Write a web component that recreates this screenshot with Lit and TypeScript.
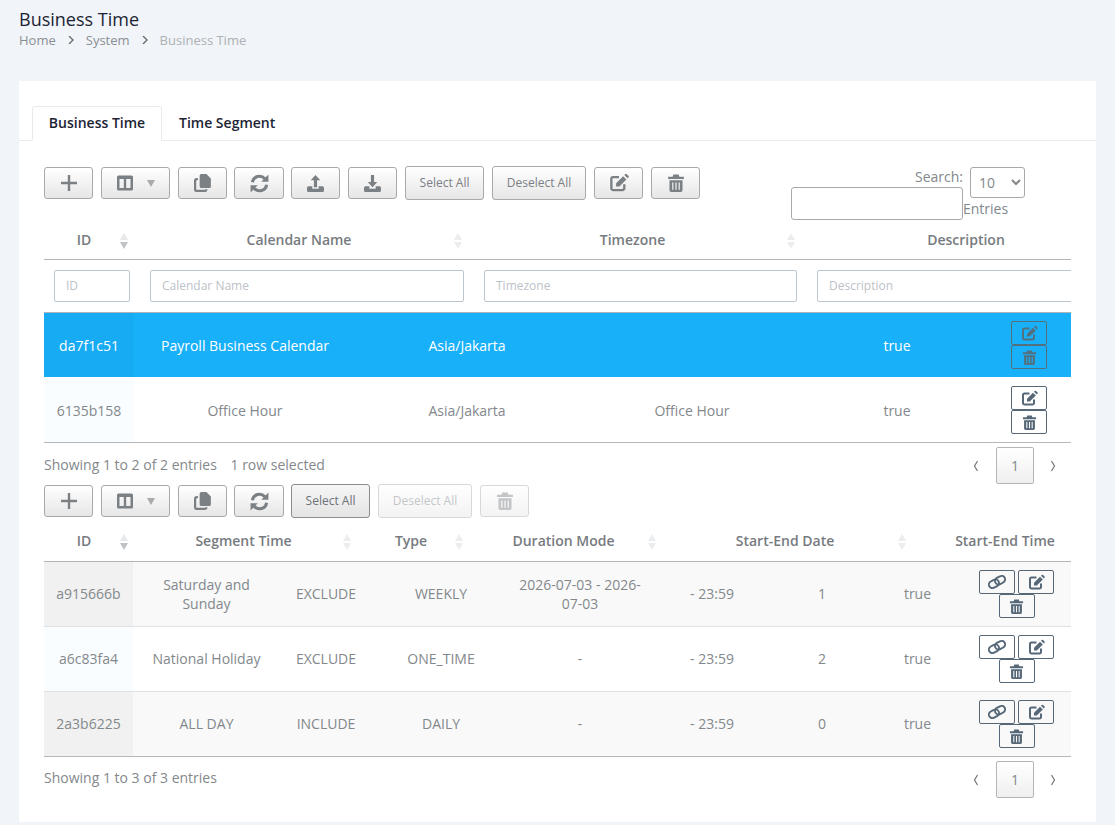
import { LitElement, html, css, svg } from 'lit';
import { customElement } from 'lit/decorators.js';

const TRAY = 'M1.5 10.5H5V13h6v-2.5h3.500a1.500 1.500 0 0 1 1.500 1.500v2.500a1.500 1.500 0 0 1-1.500 1.500h-13A1.500 1.500 0 0 1 0 14.500V12a1.500 1.500 0 0 1 1.500-1.500z';

const ICONS: Record<string, ReturnType<typeof svg>> = {
  columns: svg`<svg viewBox="0 0 16 15"><path fill-rule="evenodd" d="M1.500 0h13A1.500 1.500 0 0 1 16 1.500v12a1.500 1.500 0 0 1-1.500 1.500h-13A1.500 1.500 0 0 1 0 13.500v-12A1.500 1.500 0 0 1 1.500 0zM2.500 3.500v9h4.300v-9zM9.200 3.500v9h4.300v-9z"/></svg>`,
  copy: svg`<svg viewBox="0 0 16 16"><path d="M6.500 0H11l4 4v7a1.500 1.500 0 0 1-1.500 1.500h-7A1.500 1.500 0 0 1 5 11V1.500A1.500 1.500 0 0 1 6.500 0z"/><path d="M3.500 4.500H2.500A1.500 1.500 0 0 0 1 6v8a1 1 0 0 0 1 1h7.500a1.500 1.500 0 0 0 1.500-1.500" fill="none" stroke="currentColor" stroke-width="2"/></svg>`,
  sync: svg`<svg viewBox="0 0 16 16"><path d="M2 7a6 6 0 0 1 10.500-3M14 9a6 6 0 0 1-10.500 3" fill="none" stroke="currentColor" stroke-width="2.600"/><path d="M15.500.5V6.500H9.500zM.5 15.500V9.500H6.500z"/></svg>`,
  upload: svg`<svg viewBox="0 0 16 16"><path d="M8 0l4.500 5H9.500v6.500h-3V5H3.500z"/><path d=${TRAY}/></svg>`,
  download: svg`<svg viewBox="0 0 16 16"><path d="M6.500 0h3v6.500h3L8 11.500 3.500 6.500h3z"/><path d=${TRAY}/></svg>`,
  edit: svg`<svg viewBox="0 0 17 16"><path d="M8.500 3H3.500A1.500 1.500 0 0 0 2 4.500v8A1.500 1.500 0 0 0 3.500 14h8a1.500 1.500 0 0 0 1.500-1.500V9" fill="none" stroke="currentColor" stroke-width="2"/><path d="M6 11V8.200L12 2.200 14.800 5l-6 6z"/><path d="M13 1.200l.7-.7a1 1 0 0 1 1.400 0l1.400 1.400a1 1 0 0 1 0 1.400l-.7.7z"/></svg>`,
  trash: svg`<svg viewBox="0 0 14 16"><path d="M0 2.500h4L4.600.5h4.800l.6 2h4v2H0z"/><path fill-rule="evenodd" d="M1.200 5.500h11.600v9a1.500 1.500 0 0 1-1.500 1.500H2.700a1.500 1.500 0 0 1-1.500-1.500zM3.600 7.500V14h1.100V7.500zM6.450 7.500V14h1.100V7.500zM9.300 7.500V14h1.100V7.500z"/></svg>`,
  link: svg`<svg viewBox="0 0 18 14"><g fill="none" stroke="currentColor" stroke-width="1.900"><rect x="0.800" y="5.300" width="10.500" height="7" rx="3.500" transform="rotate(-28 6 9)"/><rect x="6.700" y="1.700" width="10.500" height="7" rx="3.500" transform="rotate(-28 12 5)"/></g></svg>`,
  plus: svg`<svg viewBox="0 0 16 16"><path d="M6.800 0h2.400v6.800H16v2.400H9.200V16H6.800V9.200H0V6.800h6.800z"/></svg>`,
};

const icon = (name: string, size = 18) =>
  html`<span class="ic" style="width:${size}px;height:${size}px">${ICONS[name]}</span>`;

type Col = { label: string; width: number };
const cal_head: Col[] = [
  { label: 'ID', width: 96 },
  { label: 'Calendar Name', width: 334 },
  { label: 'Timezone', width: 333 },
  { label: 'Description', width: 334 },
];
const seg_head: Col[] = [
  { label: 'ID', width: 96 },
  { label: 'Segment Time', width: 223 },
  { label: 'Type', width: 112 },
  { label: 'Duration Mode', width: 193 },
  { label: 'Start-End Date', width: 250 },
  { label: 'Start-End Time', width: 190 },
];
const cal_cols = [90, 222, 222, 228, 182, 83];
const seg_cols = [89, 147, 92, 138, 140, 124, 96, 95, 103];

const cal_rows = [
  { sel: true, cells: ['da7f1c51', 'Payroll Business Calendar', 'Asia/Jakarta', '', 'true'] },
  { sel: false, cells: ['6135b158', 'Office Hour', 'Asia/Jakarta', 'Office Hour', 'true'] },
];
const seg_rows = [
  ['a915666b', 'Saturday and Sunday', 'EXCLUDE', 'WEEKLY', '2026-07-03 - 2026-07-03', '- 23:59', '1', 'true'],
  ['a6c83fa4', 'National Holiday', 'EXCLUDE', 'ONE_TIME', '-', '- 23:59', '2', 'true'],
  ['2a3b6225', 'ALL DAY', 'INCLUDE', 'DAILY', '-', '- 23:59', '0', 'true'],
];

const tpl = (cols: number[]) => cols.map((c) => `${c}px`).join(' ');

@customElement('app-root')
export class AppRoot extends LitElement {
  static styles = css`
    :host {
      display: block;
      min-height: 825px;
      background: #f1f4f8;
      font-family: 'Open Sans', sans-serif;
      font-size: 14px;
      color: #83888c;
    }
    .page-head {
      padding: 7px 19px 0;
      height: 81px;
      box-sizing: border-box;
    }
    h1 {
      margin: 0;
      font-size: 18px;
      font-weight: 400;
      line-height: 24px;
      color: #1c2434;
    }
    .crumbs {
      display: flex;
      align-items: center;
      font-size: 13px;
      line-height: 18px;
      color: #8a8f94;
    }
    .crumbs .sep {
      width: 8px;
      height: 8px;
      margin: 0 11px;
      color: #666;
    }
    .crumbs .sep svg {
      display: block;
      width: 8px;
      height: 8px;
    }
    .crumbs .last {
      color: #adb1b5;
    }
    .card {
      margin: 0 19px 3px;
      height: 741px;
      box-sizing: border-box;
      background: #fff;
      padding-top: 25px;
    }
    .tabs {
      display: flex;
      padding-left: 13px;
      height: 35px;
      box-sizing: border-box;
      border-bottom: 1px solid #e8ebee;
      font-weight: 600;
      color: #1c2434;
    }
    .tab {
      height: 35px;
      box-sizing: border-box;
      padding: 0 17px;
      line-height: 33px;
    }
    .tab.active {
      width: 130px;
      padding: 0;
      line-height: 31px;
      text-align: center;
      background: #fff;
      border: 1px solid #e8ebee;
      border-bottom-color: #fff;
      border-radius: 3px 3px 0 0;
    }
    .content {
      padding: 25px 25px 0;
    }
    .tool-top {
      display: flex;
      justify-content: space-between;
      height: 56px;
    }
    .tools {
      display: flex;
      align-items: center;
      gap: 8px;
      height: 34px;
    }
    .btn {
      display: flex;
      align-items: center;
      justify-content: center;
      box-sizing: border-box;
      width: 49px;
      height: 32px;
      border: 1px solid #a9a9a9;
      border-radius: 3px;
      background: linear-gradient(#fff, #e6e6e6);
      color: #7b8085;
      font-size: 12px;
      gap: 14px;
    }
    .btn.wide {
      height: 34px;
      padding-bottom: 2px;
    }
    .btn.w-col {
      width: 69px;
    }
    .btn.w-sync {
      width: 50px;
      margin: 0 -1px;
    }
    .btn.w-sel {
      width: 79px;
    }
    .btn.w-desel {
      width: 94px;
    }
    .btn.on {
      border-color: #8c8c8c;
      background: linear-gradient(#f6f6f6, #e4e4e4);
      color: #6d7277;
    }
    .btn.off {
      opacity: 0.45;
    }
    .caret {
      width: 0;
      height: 0;
      border-left: 4px solid transparent;
      border-right: 4px solid transparent;
      border-top: 7px solid #aaa;
    }
    .ic {
      display: inline-flex;
      flex: none;
    }
    .ic svg {
      width: 100%;
      height: 100%;
      fill: currentColor;
    }
    .search {
      display: grid;
      grid-template-columns: 172px 62px;
      margin-right: 46px;
      margin-top: 1px;
      line-height: 20px;
    }
    .search-l {
      text-align: right;
    }
    .search-l span {
      display: block;
    }
    .search-l input {
      display: block;
      width: 172px;
      height: 33px;
      box-sizing: border-box;
      border: 1px solid #a9a9a9;
      border-radius: 3px;
      background: #fff;
    }
    .search-r select {
      display: block;
      margin-left: 7px;
      width: 55px;
      height: 31px;
      border: 1px solid #a9a9a9;
      border-radius: 3px;
      background: #fff;
      color: #83888c;
      font: 14px 'Open Sans', sans-serif;
      padding-left: 4px;
    }
    .search-r span {
      display: block;
      margin-top: 1px;
    }
    .clip {
      overflow: hidden;
    }
    .head {
      display: flex;
      width: max-content;
      border-bottom: 1px solid #b0b4b8;
      min-width: 100%;
    }
    .th {
      position: relative;
      flex: none;
      box-sizing: border-box;
      padding: 0 26px 0 10px;
      text-align: center;
      font-weight: 600;
      color: #777b80;
      white-space: nowrap;
    }
    .sort {
      position: absolute;
      right: 11px;
      top: 50%;
      margin-top: -8px;
      width: 9px;
      height: 16px;
    }
    .sort::before,
    .sort::after {
      content: '';
      position: absolute;
      left: 0;
      border-left: 4.5px solid transparent;
      border-right: 4.5px solid transparent;
    }
    .sort::before {
      top: 0;
      border-bottom: 7px solid #ebedef;
    }
    .sort::after {
      bottom: 0;
      border-top: 7px solid #ebedef;
    }
    .sort.asc::before {
      border-bottom-color: #e6e8ea;
    }
    .sort.asc::after {
      border-top-color: #c0c3c6;
    }
    .cal-head .th {
      height: 37px;
      line-height: 35px;
    }
    .seg-head .th {
      height: 39px;
      line-height: 37px;
    }
    .filters {
      display: flex;
      width: max-content;
      height: 53px;
      box-sizing: border-box;
      align-items: center;
      border-bottom: 1px solid #b0b4b8;
    }
    .filters div {
      flex: none;
      box-sizing: border-box;
      padding: 0 10px;
    }
    .filters input {
      display: block;
      width: 100%;
      height: 32px;
      box-sizing: border-box;
      border: 1px solid #bcc6ce;
      border-radius: 2px;
      padding: 0 11px 2px;
      font: 12px 'Open Sans', sans-serif;
    }
    .filters input::placeholder {
      color: #bcc2c8;
      opacity: 1;
    }
    .row {
      display: grid;
      height: 65px;
      box-sizing: border-box;
      border-bottom: 1px solid #dfe1e3;
      align-items: stretch;
    }
    .row:last-child {
      border-bottom-color: #b5b7b9;
    }
    .td {
      display: flex;
      align-items: center;
      justify-content: center;
      text-align: center;
      padding: 0 8px;
    }
    .seg-row .td {
      padding-bottom: 1px;
    }
    .td.first {
      background: #fafdff;
    }
    .row.sel {
      background: #18b0f9;
      color: #fff;
      border-bottom-color: #fff;
    }
    .row.sel .first {
      background: #16abf3;
    }
    .row.sel .act {
      border-color: #53707f;
      color: #53707f;
    }
    .row.odd {
      background: #f9f9f9;
    }
    .row.odd .first {
      background: #f1f1f1;
    }
    .row .acts {
      display: flex;
      flex-wrap: wrap;
      align-content: center;
      justify-content: center;
      column-gap: 3px;
      padding: 0;
    }
    .row .acts.stack {
      padding: 0 24px 0 23px;
    }
    .act {
      display: flex;
      align-items: center;
      justify-content: center;
      width: 36px;
      height: 24px;
      box-sizing: border-box;
      border: 1px solid #566878;
      border-radius: 2px;
      color: #566878;
    }
    .foot {
      display: flex;
      justify-content: space-between;
      height: 41px;
      line-height: 44px;
    }
    .foot.end {
      line-height: 42px;
    }
    .foot .sel-count {
      margin-left: 10px;
    }
    .pager {
      display: flex;
      align-items: center;
      height: 37px;
      margin-top: 4px;
      line-height: 1;
      margin-right: 15px;
    }
    .pager svg {
      display: block;
      width: 6px;
      height: 12px;
      fill: none;
      stroke: #6f7478;
      stroke-width: 1.2;
    }
    .pager .page {
      display: flex;
      align-items: center;
      justify-content: center;
      width: 38px;
      height: 37px;
      box-sizing: border-box;
      margin: 0 16px 0 17px;
      border: 1px solid #b5b5b5;
      border-radius: 2px;
      background: linear-gradient(#fff, #efefef);
    }
    .tool-seg {
      height: 38px;
      align-items: flex-start;
    }
    .tool-seg .btn:not(.wide) {
      margin-top: 1px;
    }
  `;

  private pager() {
    return html`<div class="pager">
      <svg viewBox="0 0 6 12"><path d="M4.500 1L1.500 6l3 5" /></svg>
      <span class="page">1</span>
      <svg viewBox="0 0 6 12"><path d="M1.500 1l3 5-3 5" /></svg>
    </div>`;
  }

  private header(cols: Col[], cls: string) {
    return html`<div class="head ${cls}">
      ${cols.map(
        (c, i) => html`<div class="th" style="width:${c.width}px">
          ${c.label}${i < cols.length - 1
            ? html`<span class="sort ${i === 0 ? 'asc' : ''}"></span>`
            : ''}
        </div>`
      )}
    </div>`;
  }

  render() {
    return html`
      <div class="page-head">
        <h1>Business Time</h1>
        <div class="crumbs">
          <span>Home</span>
          <span class="sep"><svg viewBox="0 0 8 8"><path d="M2 0l4 4-4 4" fill="none" stroke="currentColor" stroke-width="1.300" /></svg></span>
          <span>System</span>
          <span class="sep"><svg viewBox="0 0 8 8"><path d="M2 0l4 4-4 4" fill="none" stroke="currentColor" stroke-width="1.300" /></svg></span>
          <span class="last">Business Time</span>
        </div>
      </div>
      <div class="card">
        <div class="tabs">
          <div class="tab active">Business Time</div>
          <div class="tab">Time Segment</div>
        </div>
        <div class="content">
          <div class="tool-top">
            <div class="tools">
              <div class="btn">${icon('plus', 16)}</div>
              <div class="btn w-col">${icon('columns', 16)}<span class="caret"></span></div>
              <div class="btn">${icon('copy', 18)}</div>
              <div class="btn w-sync">${icon('sync', 19)}</div>
              <div class="btn">${icon('upload', 17)}</div>
              <div class="btn">${icon('download', 17)}</div>
              <div class="btn wide w-sel">Select All</div>
              <div class="btn wide w-desel">Deselect All</div>
              <div class="btn">${icon('edit', 20)}</div>
              <div class="btn">${icon('trash', 18)}</div>
            </div>
            <div class="search">
              <div class="search-l">
                <span>Search:</span>
                <input type="text" />
              </div>
              <div class="search-r">
                <select><option>10</option></select>
                <span>Entries</span>
              </div>
            </div>
          </div>
          <div class="clip">
            ${this.header(cal_head, 'cal-head')}
            <div class="filters">
              ${cal_head.map(
                (c) => html`<div style="width:${c.width}px"><input placeholder=${c.label} /></div>`
              )}
            </div>
            ${cal_rows.map(
              (r) => html`<div class="row ${r.sel ? 'sel' : ''}" style="grid-template-columns:${tpl(cal_cols)}">
                ${r.cells.map((c, i) => html`<div class="td ${i === 0 ? 'first' : ''}">${c}</div>`)}
                <div class="td acts stack">
                  <span class="act">${icon('edit', 17)}</span>
                  <span class="act">${icon('trash', 15)}</span>
                </div>
              </div>`
            )}
          </div>
          <div class="foot">
            <div>Showing 1 to 2 of 2 entries <span class="sel-count">1 row selected</span></div>
            ${this.pager()}
          </div>
          <div class="tools tool-seg">
            <div class="btn">${icon('plus', 16)}</div>
            <div class="btn w-col">${icon('columns', 16)}<span class="caret"></span></div>
            <div class="btn">${icon('copy', 18)}</div>
            <div class="btn w-sync">${icon('sync', 19)}</div>
            <div class="btn wide w-sel on">Select All</div>
            <div class="btn wide w-desel off">Deselect All</div>
            <div class="btn off">${icon('trash', 18)}</div>
          </div>
          <div class="clip">
            ${this.header(seg_head, 'seg-head')}
            ${seg_rows.map(
              (r, ri) => html`<div class="row seg-row ${ri % 2 === 0 ? 'odd' : ''}" style="grid-template-columns:${tpl(seg_cols)}">
                ${r.map((c, i) => html`<div class="td ${i === 0 ? 'first' : ''}">${c}</div>`)}
                <div class="td acts">
                  <span class="act">${icon('link', 18)}</span>
                  <span class="act">${icon('edit', 17)}</span>
                  <span class="act">${icon('trash', 15)}</span>
                </div>
              </div>`
            )}
          </div>
          <div class="foot end">
            <div>Showing 1 to 3 of 3 entries</div>
            ${this.pager()}
          </div>
        </div>
      </div>
    `;
  }
}
